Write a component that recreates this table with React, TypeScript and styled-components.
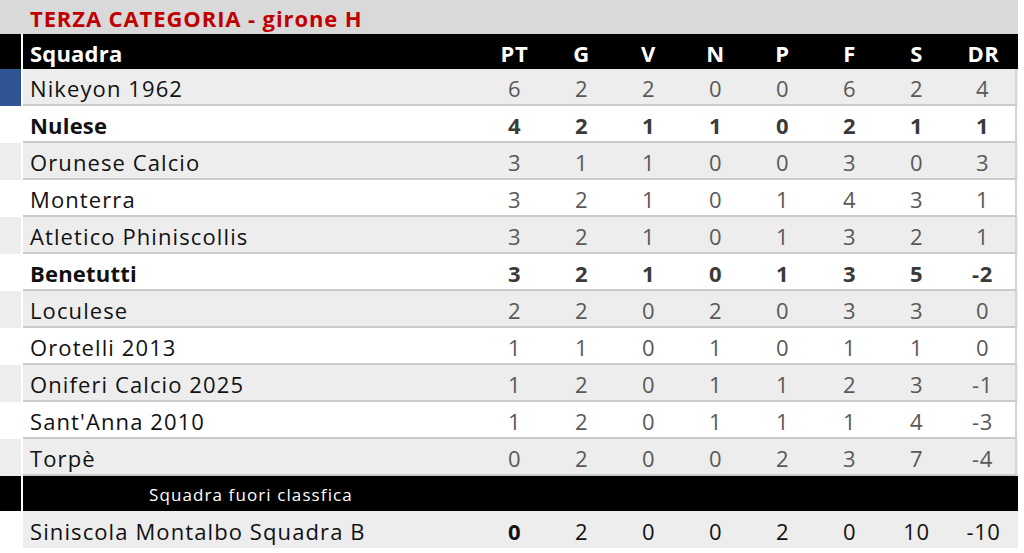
import React from 'react'
import styled, { createGlobalStyle } from 'styled-components'

const GlobalStyle = createGlobalStyle`
  html, body {
    margin: 0;
    padding: 0;
    background: #ffffff;
  }
  body {
    font-family: 'Open Sans', 'Noto Sans', 'Liberation Sans', sans-serif;
  }
`

const COLS = ['PT', 'G', 'V', 'N', 'P', 'F', 'S', 'DR']

type Team = {
  name: string
  stats: number[]
  bold?: boolean
}

const teams: Team[] = [
  { name: 'Nikeyon 1962', stats: [6, 2, 2, 0, 0, 6, 2, 4] },
  { name: 'Nulese', stats: [4, 2, 1, 1, 0, 2, 1, 1], bold: true },
  { name: 'Orunese Calcio', stats: [3, 1, 1, 0, 0, 3, 0, 3] },
  { name: 'Monterra', stats: [3, 2, 1, 0, 1, 4, 3, 1] },
  { name: 'Atletico Phiniscollis', stats: [3, 2, 1, 0, 1, 3, 2, 1] },
  { name: 'Benetutti', stats: [3, 2, 1, 0, 1, 3, 5, -2], bold: true },
  { name: 'Loculese', stats: [2, 2, 0, 2, 0, 3, 3, 0] },
  { name: 'Orotelli 2013', stats: [1, 1, 0, 1, 0, 1, 1, 0] },
  { name: 'Oniferi Calcio 2025', stats: [1, 2, 0, 1, 1, 2, 3, -1] },
  { name: "Sant'Anna 2010", stats: [1, 2, 0, 1, 1, 1, 4, -3] },
  { name: 'Torpè', stats: [0, 2, 0, 0, 2, 3, 7, -4] },
]

const Sheet = styled.div`
  width: 1018px;
  display: flex;
  flex-direction: column;
`

const TitleBar = styled.div`
  height: 34px;
  background: #d9d9d9;
  display: flex;
  align-items: center;
  padding: 2px 0 0 30px;
  box-sizing: border-box;
  color: #c00000;
  font-size: 22px;
  font-weight: 700;
  letter-spacing: 0.9px;
`

const Row = styled.div<{ $bg: string; $height: number }>`
  display: grid;
  grid-template-columns: 23px 458px repeat(8, 67px);
  height: ${p => p.$height}px;
  background: ${p => p.$bg};
`

const Marker = styled.div<{ $color: string }>`
  background: ${p => p.$color};
  border-right: 2px solid #ffffff;
`

const NameCell = styled.div<{ $bold?: boolean; $white?: boolean; $line?: boolean }>`
  display: flex;
  align-items: center;
  padding: 3px 0 0 7px;
  font-size: 22px;
  font-weight: ${p => (p.$bold ? 700 : 400)};
  letter-spacing: ${p => (p.$bold ? '0.2px' : '1.1px')};
  color: ${p => (p.$white ? '#ffffff' : '#111111')};
  border-bottom: ${p => (p.$line ? '2px solid #cbcbcb' : 'none')};
`

const NumCell = styled.div<{ $bold?: boolean; $color: string; $line?: boolean; $last?: boolean }>`
  display: flex;
  align-items: center;
  justify-content: center;
  padding-top: 3px;
  font-size: 22px;
  font-weight: ${p => (p.$bold ? 700 : 400)};
  letter-spacing: 0.6px;
  color: ${p => p.$color};
  border-bottom: ${p => (p.$line ? '2px solid #cbcbcb' : 'none')};
  border-right: ${p => (p.$last ? '2px solid #d4d4d4' : 'none')};
`

const BandCell = styled.div`
  grid-column: 2 / -1;
  display: flex;
  align-items: center;
  padding: 2px 0 0 126px;
  font-size: 17px;
  letter-spacing: 1.1px;
  color: #ffffff;
`

const HeaderRow = () => (
  <Row $bg="#000000" $height={35}>
    <Marker $color="#000000" />
    <NameCell $bold $white>
      Squadra
    </NameCell>
    {COLS.map(c => (
      <NumCell key={c} $bold $color="#ffffff">
        {c}
      </NumCell>
    ))}
  </Row>
)

const TeamRow = ({ team, index }: { team: Team; index: number }) => {
  const bg = index % 2 === 0 ? '#ededed' : '#ffffff'
  const numColor = team.bold ? '#3a3a3a' : '#595959'
  return (
    <Row $bg={bg} $height={37}>
      <Marker $color={index === 0 ? '#2f5597' : bg} />
      <NameCell $bold={team.bold} $line>
        {team.name}
      </NameCell>
      {team.stats.map((s, i) => (
        <NumCell
          key={COLS[i]}
          $bold={team.bold}
          $color={numColor}
          $line
          $last={i === team.stats.length - 1}
        >
          {s}
        </NumCell>
      ))}
    </Row>
  )
}

const OutRow = () => {
  const stats = [0, 2, 0, 0, 2, 0, 10, -10]
  return (
    <Row $bg="#ededed" $height={37}>
      <Marker $color="#ffffff" />
      <NameCell>Siniscola Montalbo Squadra B</NameCell>
      {stats.map((s, i) => (
        <NumCell key={COLS[i]} $bold={i === 0} $color="#111111">
          {s}
        </NumCell>
      ))}
    </Row>
  )
}

export default function App() {
  return (
    <>
      <GlobalStyle />
      <Sheet>
        <TitleBar>TERZA CATEGORIA - girone H</TitleBar>
        <HeaderRow />
        {teams.map((t, i) => (
          <TeamRow key={t.name} team={t} index={i} />
        ))}
        <Row $bg="#000000" $height={35}>
          <Marker $color="#000000" />
          <BandCell>Squadra fuori classfica</BandCell>
        </Row>
        <OutRow />
      </Sheet>
    </>
  )
}
